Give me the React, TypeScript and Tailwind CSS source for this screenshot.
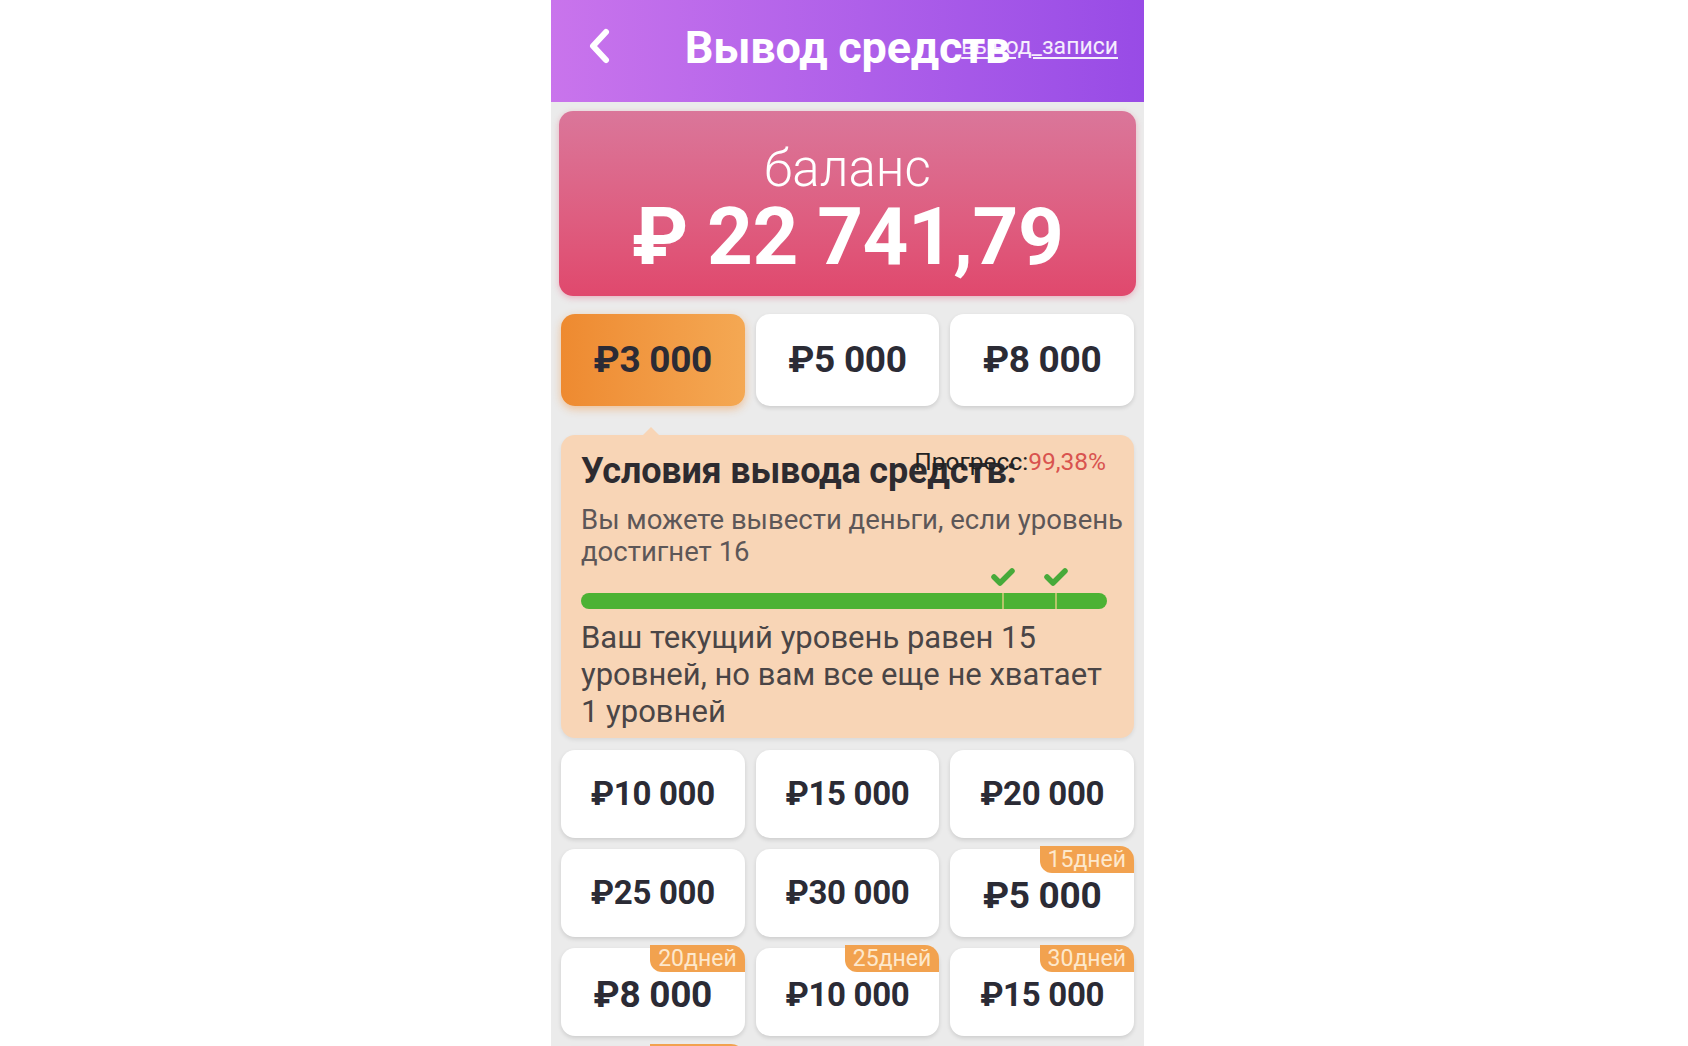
import React from "react";

type Amount = { label: string; days?: string };

const topAmounts: Amount[] = [{ label: "₽3 000" }, { label: "₽5 000" }, { label: "₽8 000" }];

const moreAmounts: Amount[] = [
  { label: "₽10 000" },
  { label: "₽15 000" },
  { label: "₽20 000" },
  { label: "₽25 000" },
  { label: "₽30 000" },
  { label: "₽5 000", days: "15дней" },
  { label: "₽8 000", days: "20дней" },
  { label: "₽10 000", days: "25дней" },
  { label: "₽15 000", days: "30дней" },
  { label: "₽20 000", days: "40дней" },
  { label: "₽25 000" },
  { label: "₽30 000" },
];

function Check({ className }: { className?: string }) {
  return (
    <svg width="26" height="20" viewBox="0 0 26 20" className={className}>
      <path d="M4 10 L10 16 L22 4" fill="none" stroke="#47aa3a" strokeWidth="5.5" strokeLinecap="round" strokeLinejoin="round" />
    </svg>
  );
}

function AmountCard({ item, active }: { item: Amount; active?: boolean }) {
  const big = item.label.length <= 6;
  return (
    <div
      className={`relative h-full flex items-center justify-center rounded-[14px] ${
        active
          ? "bg-gradient-to-r from-[#ee8a30] to-[#f4a853] shadow-[0_3px_8px_rgba(240,140,50,0.45)]"
          : "bg-white shadow-[0_2px_4px_rgba(0,0,0,0.13)]"
      }`}
    >
      {item.days && (
        <div className="absolute -top-[3px] right-0 h-[27px] px-[8px] pt-[3px] rounded-bl-[12px] rounded-tr-[14px] overflow-hidden bg-[#f2a24f] text-[23px] leading-[22px] text-[#fde8cc]">
          {item.days}
        </div>
      )}
      <span
        className={`font-bold text-[#2b2b35] tracking-[-0.3px] ${big ? "text-[37px]" : "text-[33px]"} ${item.days ? "mt-[6px]" : ""}`}
      >
        {item.label}
      </span>
    </div>
  );
}

export default function App() {
  return (
    <div className="w-full h-[1046px] bg-white flex justify-center overflow-hidden" style={{ fontFamily: "Roboto, 'Noto Sans', sans-serif" }}>
      <div className="ml-[7px] w-[593px] h-[1046px] bg-[#ebebeb] flex flex-col overflow-hidden">
        {/* HEADER */}
        <header className="relative h-[102px] shrink-0 bg-gradient-to-r from-[#c974ec] to-[#984be6] flex items-center justify-center pb-[6px]">
          <svg width="28" height="40" viewBox="0 0 28 40" className="absolute left-[35px] top-[27px]">
            <path d="M20 5 L7 19 L20 33" fill="none" stroke="white" strokeWidth="6" strokeLinecap="round" strokeLinejoin="round" />
          </svg>
          <h1 className="text-[45px] font-bold text-white tracking-[-0.2px]">Вывод средств</h1>
          <a className="absolute right-[26px] top-[34px] text-[23px] leading-[26px] text-white/90 underline underline-offset-[3px]">
            вывод_записи
          </a>
        </header>

        {/* BALANCE */}
        <div className="shrink-0 mx-[8px] mt-[9px] h-[185px] rounded-[14px] bg-gradient-to-b from-[#da769a] to-[#e0486d] shadow-[0_2px_6px_rgba(224,72,109,0.35)] flex flex-col items-center pt-[30px] text-white">
          <div className="text-[51px] font-light leading-[56px]">баланс</div>
          <div className="text-[80px] font-bold leading-[84px] tracking-[-0.5px] -mt-[2px]">₽ 22 741,79</div>
        </div>

        {/* TOP AMOUNTS */}
        <div className="shrink-0 grid grid-cols-3 grid-rows-[92px] gap-[11px] px-[10px] mt-[18px]">
          {topAmounts.map((a, i) => (
            <AmountCard key={a.label} item={a} active={i === 0} />
          ))}
        </div>

        {/* CONDITIONS */}
        <div className="shrink-0 relative mx-[10px] mt-[29px] h-[303px] rounded-[14px] bg-[#f8d5b6] shadow-[0_2px_4px_rgba(0,0,0,0.08)] pl-[20px] pr-[10px] pt-[16px]">
          <div className="absolute -top-[8px] left-[82px] w-0 h-0 border-l-[8px] border-r-[8px] border-b-[8px] border-l-transparent border-r-transparent border-b-[#f8d5b6]" />
          <div className="absolute top-[14px] right-[28px] text-[24.5px] leading-[26px] text-[#222]">
            Прогресс:<span className="text-[#d9534f]">99,38%</span>
          </div>
          <div className="text-[36px] font-bold leading-[40px] text-[#2d2b30] tracking-[-0.2px]">Условия вывода средств:</div>
          <p className="mt-[13px] text-[27.5px] leading-[32px] text-[#5d5758]">
            Вы можете вывести деньги, если уровень достигнет 16
          </p>
          <div className="relative mt-[25px] w-[526px] h-[16px] rounded-full bg-[#4cb234]">
            <div className="absolute left-[421px] top-0 h-full w-[2px] bg-[#b7c56a]" />
            <div className="absolute left-[474px] top-0 h-full w-[2px] bg-[#b7c56a]" />
            <Check className="absolute left-[409px] -top-[26px]" />
            <Check className="absolute left-[462px] -top-[26px]" />
          </div>
          <p className="mt-[10px] pr-[14px] text-[31px] leading-[37px] text-[#4a4546]">
            Ваш текущий уровень равен 15 уровней, но вам все еще не хватает 1 уровней
          </p>
        </div>

        {/* MORE AMOUNTS */}
        <div className="shrink-0 grid grid-cols-3 auto-rows-[88px] gap-[11px] px-[10px] pt-[3px] mt-[9px]">
          {moreAmounts.map((a, i) => (
            <AmountCard key={i} item={a} />
          ))}
        </div>
      </div>
    </div>
  );
}
